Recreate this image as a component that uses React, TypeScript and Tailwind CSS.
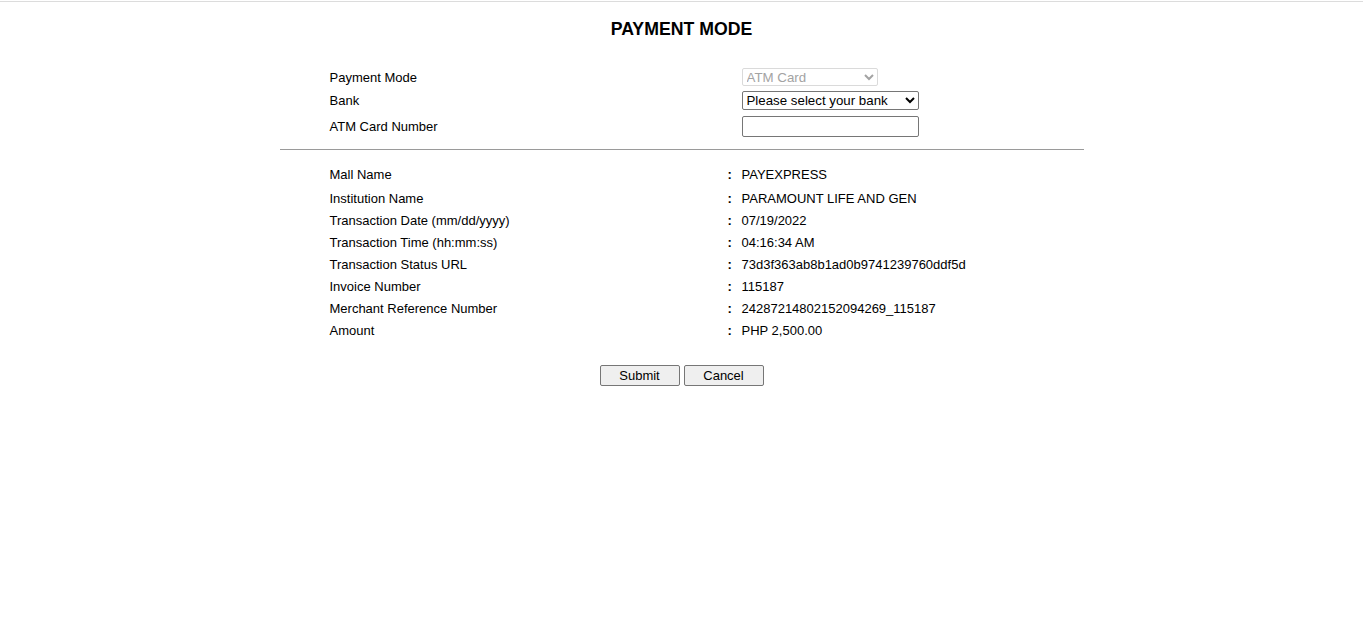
import React from "react";

type Row = { label: string; value: string };

const rows: Row[] = [
  { label: "Mall Name", value: "PAYEXPRESS" },
  { label: "Institution Name", value: "PARAMOUNT LIFE AND GEN" },
  { label: "Transaction Date (mm/dd/yyyy)", value: "07/19/2022" },
  { label: "Transaction Time (hh:mm:ss)", value: "04:16:34 AM" },
  { label: "Transaction Status URL", value: "73d3f363ab8b1ad0b9741239760ddf5d" },
  { label: "Invoice Number", value: "115187" },
  { label: "Merchant Reference Number", value: "24287214802152094269_115187" },
  { label: "Amount", value: "PHP 2,500.00" },
];

const App: React.FC = () => {
  return (
    <div
      className="min-h-screen bg-white text-[13px] text-black"
      style={{ fontFamily: '"Liberation Sans", Arial, sans-serif' }}
    >
      <div className="h-px mt-px bg-[#dcdcdc]" />

      {/* Heading */}
      <h1 className="mt-[17px] h-[20px] leading-[20px] text-center font-bold text-[17.7px]">
        PAYMENT MODE
      </h1>

      <div className="w-[804px] mx-auto mt-[27px]">
        {/* Form */}
        <div className="px-[50px]">
          <div className="grid grid-cols-[412px_1fr] items-center h-[23px]">
            <span>Payment Mode</span>
            <select
              disabled
              className="w-[136px] h-[18px] -mt-[1px] border border-[#dadada] rounded-[2px] text-[#a3a3a3] text-[13.3px] bg-white"
            >
              <option>ATM Card</option>
            </select>
          </div>
          <div className="grid grid-cols-[412px_1fr] items-center h-[23px]">
            <span>Bank</span>
            <select className="w-[177px] h-[19px] border border-[#767676] rounded-[2px] text-[13.3px] bg-white">
              <option>Please select your bank</option>
            </select>
          </div>
          <div className="grid grid-cols-[412px_1fr] items-center h-[29px]">
            <span>ATM Card Number</span>
            <input
              type="text"
              className="w-[177px] h-[21px] border border-[#767676] rounded-[2px] bg-white px-1 text-[13px]"
            />
          </div>
        </div>

        <hr className="mt-[8px] border-t border-[#9a9a9a]" />

        {/* Details */}
        <div className="px-[50px] mt-[12px]">
          {rows.map((r, i) => (
            <div
              key={r.label}
              className={`grid grid-cols-[398px_14px_1fr] items-center ${i === 0 ? "h-[26px]" : "h-[22px]"}`}
            >
              <span>{r.label}</span>
              <span className="font-bold">:</span>
              <span>{r.value}</span>
            </div>
          ))}
        </div>

        <div className="flex justify-center gap-[4px] mt-[23px]">
          <button className="w-[80px] h-[21px] border border-[#767676] rounded-[2px] bg-[#efefef] text-[13px]">
            Submit
          </button>
          <button className="w-[80px] h-[21px] border border-[#767676] rounded-[2px] bg-[#efefef] text-[13px]">
            Cancel
          </button>
        </div>
      </div>
    </div>
  );
};

export default App;
